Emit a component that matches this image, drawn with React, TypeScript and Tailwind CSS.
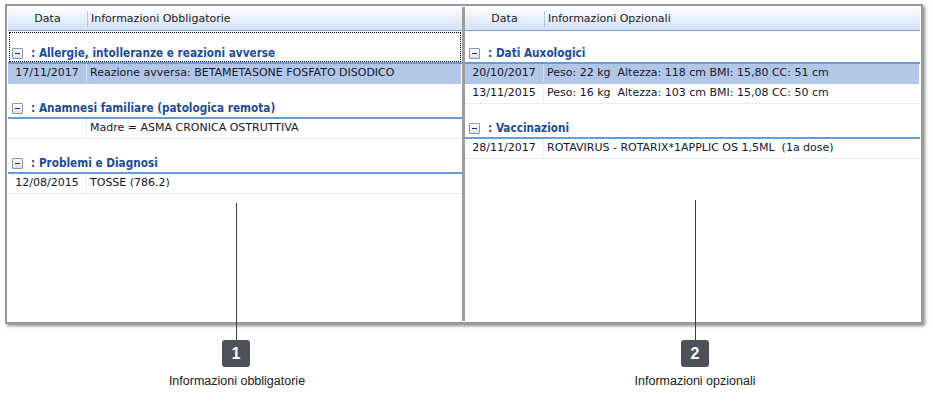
import React from "react";

const F = { fontFamily: '"DejaVu Sans", sans-serif' };
const FC = { fontFamily: '"DejaVu Sans Condensed", "DejaVu Sans", sans-serif' };
const FL = { fontFamily: '"Liberation Sans", Arial, sans-serif' };

function Minus() {
  return (
    <span className="inline-flex w-[11px] h-[11px] items-center justify-center border border-[#8396b3] bg-gradient-to-b from-white to-[#d9e2ee] rounded-[1px] mr-[8px] shrink-0">
      <span className="block w-[5px] h-[1px] bg-[#1c2f52]" />
    </span>
  );
}

function Group({ title, first, focus }: { title: string; first?: boolean; focus?: boolean }) {
  return (
    <div className={`relative flex items-end border-b-2 border-[#6b9bd6] ${first ? "pt-[13px]" : "pt-[15px]"}`}>
      {focus && <span className="absolute left-[1px] right-[1px] top-[1px] bottom-0 border border-dotted border-black pointer-events-none" />}
      <div className="flex items-center h-[18px] pl-[4px]">
        <Minus />
        <span className="text-[11.7px] font-bold text-[#1d4c98] leading-[18px] whitespace-pre" style={FC}>: {title}</span>
      </div>
    </div>
  );
}

function Row({ date, text, sel }: { date: string; text: string; sel?: boolean }) {
  return (
    <div className={`flex h-[20px] items-center border-b border-dotted ${sel ? "bg-[#b2c7e8] border-[#b2c7e8]" : "border-[#d6d6d6]"} text-[11px] text-[#15152a] mr-[1px]`}>
      <div className={`w-[79px] h-full flex items-center justify-center shrink-0 border-r ${sel ? "border-[#d3def0]" : "border-dotted border-[#dcdcdc]"}`}>{date}</div>
      <div className="pl-[3px] whitespace-pre">{text}</div>
    </div>
  );
}

function Header({ title }: { title: string }) {
  return (
    <div className="flex h-[23px] items-center bg-gradient-to-b from-[#fbfdff] to-[#d3e2f7] border-b border-[#7aa5dc] text-[11px] text-[#1a1a1a]">
      <div className="w-[79px] flex justify-center shrink-0">Data</div>
      <div className="w-[1px] h-[16px] bg-[#b7c9e2]" />
      <div className="pl-[3px]">{title}</div>
    </div>
  );
}

export default function App() {
  return (
    <div className="relative w-[933px] h-[405px] bg-white overflow-hidden" style={F}>
      <div className="ml-[5px] mt-[4px] w-[918px] h-[320px] border-2 border-[#979797] px-[1px] pt-[2px] pb-[1px] shadow-[2px_2px_3px_rgba(0,0,0,0.45)] bg-white">
        <div className="flex h-full">
          <div className="w-[454px] flex flex-col">
            <Header title="Informazioni Obbligatorie" />
            <Group title="Allergie, intolleranze e reazioni avverse" first focus />
            <Row date="17/11/2017" text="Reazione avversa: BETAMETASONE FOSFATO DISODICO" sel />
            <Group title="Anamnesi familiare (patologica remota)" />
            <Row date="" text="Madre = ASMA CRONICA OSTRUTTIVA" />
            <Group title="Problemi e Diagnosi" />
            <Row date="12/08/2015" text="TOSSE (786.2)" />
          </div>
          <div className="w-[3px] bg-[#9c9c9c] -mt-[1px]" />
          <div className="flex-1 flex flex-col">
            <Header title="Informazioni Opzionali" />
            <Group title="Dati Auxologici" first />
            <Row date="20/10/2017" text="Peso: 22 kg  Altezza: 118 cm BMI: 15,80 CC: 51 cm" sel />
            <Row date="13/11/2015" text="Peso: 16 kg  Altezza: 103 cm BMI: 15,08 CC: 50 cm" />
            <Group title="Vaccinazioni" />
            <Row date="28/11/2017" text="ROTAVIRUS - ROTARIX*1APPLIC OS 1,5ML  (1a dose)" />
          </div>
        </div>
      </div>

      {/* Callout 1 */}
      <div className="absolute left-[236px] top-[203px] w-[1px] h-[137px] bg-[#3c3c3c]" />
      <div className="absolute left-[222px] top-[340px] w-[28px] h-[27px] rounded-[3px] bg-[#4d525a] flex items-center justify-center text-white font-bold text-[16px]" style={FL}>1</div>
      <div className="absolute left-[117px] top-[372px] w-[240px] text-center text-[12.5px] leading-[18px] text-[#202020]" style={FL}>Informazioni obbligatorie</div>

      {/* Callout 2 */}
      <div className="absolute left-[695px] top-[200px] w-[1px] h-[140px] bg-[#3c3c3c]" />
      <div className="absolute left-[681px] top-[340px] w-[28px] h-[27px] rounded-[3px] bg-[#4d525a] flex items-center justify-center text-white font-bold text-[16px]" style={FL}>2</div>
      <div className="absolute left-[575px] top-[372px] w-[240px] text-center text-[12.5px] leading-[18px] text-[#202020]" style={FL}>Informazioni opzionali</div>
    </div>
  );
}
